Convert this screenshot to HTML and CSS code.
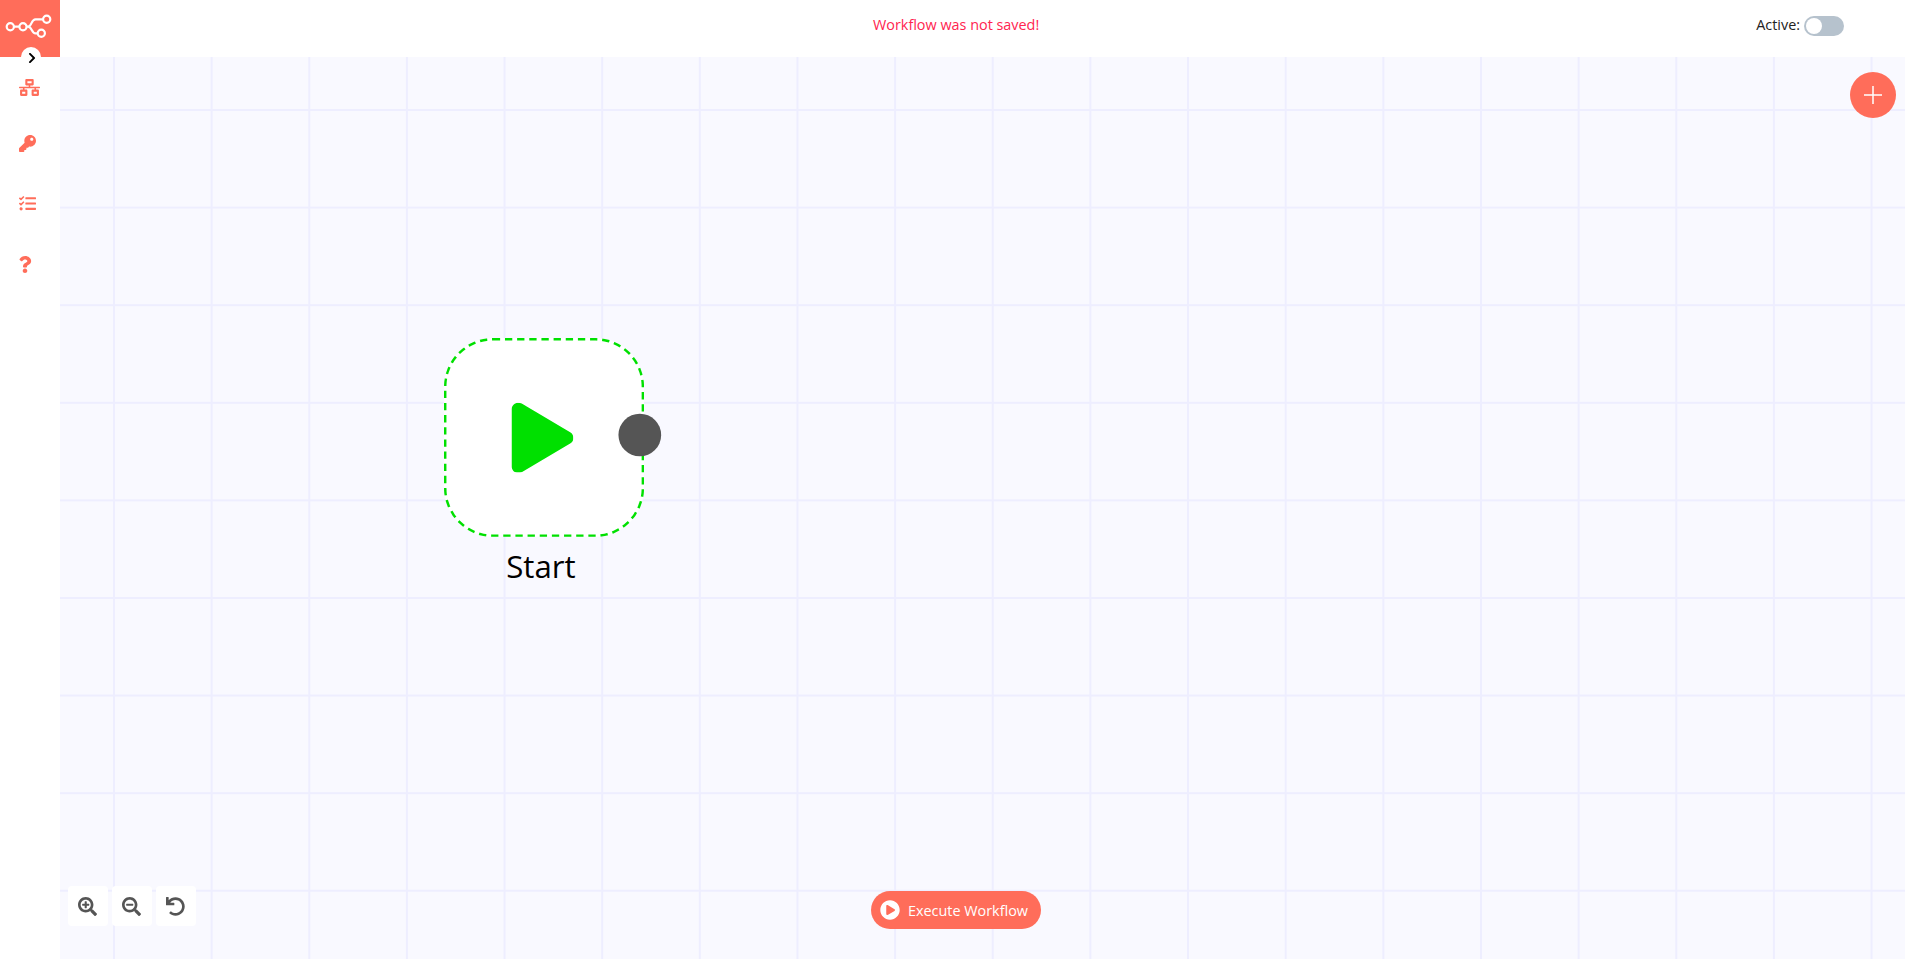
FILE: index.html
```html
<!DOCTYPE html>
<html lang="en">
<head>
    <meta charset="UTF-8">
    <meta name="viewport" content="width=device-width, initial-scale=1.0">
    <title>n8n - Workflow Automation</title>
    <link rel="stylesheet" href="styles.css">
</head>
<body>
    <div class="app">
        <aside class="sidebar">
            <div class="logo">
                <svg class="logo-mark" viewBox="0 0 60 57">
                    <circle cx="10.3" cy="26.7" r="3.6"/>
                    <circle cx="23" cy="26.7" r="3.6"/>
                    <circle cx="46.7" cy="19.3" r="3.6"/>
                    <circle cx="41.3" cy="33.3" r="3.6"/>
                    <path d="M13.9 26.7h5.500M26.600 26.700h1.400c4 0 3-7.400 7.500-7.400h7.600M28 26.700c4 0 3.500 6.600 7.500 6.600h2.200"/>
                </svg>
            </div>
            <button class="collapse">
                <svg class="collapse-icon" viewBox="0 0 320 512"><path d="M285.476 272.971L91.132 467.314c-9.373 9.373-24.569 9.373-33.941 0l-22.667-22.667c-9.357-9.357-9.375-24.522-.04-33.901L188.505 256 34.484 101.255c-9.335-9.379-9.317-24.544.04-33.901l22.667-22.667c9.373-9.373 24.569-9.373 33.941 0L285.475 239.03c9.373 9.372 9.373 24.568.001 33.941z"/></svg>
            </button>
            <nav class="menu">
                <a class="menu-item menu-workflows">
                    <svg class="menu-icon" viewBox="0 0 640 512"><path d="M640 264v-16c0-8.840-7.160-16-16-16H344v-40h72c17.670 0 32-14.330 32-32V32c0-17.670-14.330-32-32-32H224c-17.670 0-32 14.330-32 32v128c0 17.670 14.330 32 32 32h72v40H16c-8.840 0-16 7.160-16 16v16c0 8.840 7.160 16 16 16h104v40H64c-17.670 0-32 14.330-32 32v128c0 17.670 14.330 32 32 32h160c17.670 0 32-14.330 32-32V352c0-17.670-14.330-32-32-32h-56v-40h304v40h-56c-17.670 0-32 14.330-32 32v128c0 17.670 14.330 32 32 32h160c17.670 0 32-14.330 32-32V352c0-17.670-14.330-32-32-32h-56v-40h104c8.840 0 16-7.160 16-16zM256 128V64h128v64H256zm-64 320H96v-64h96v64zm352 0h-96v-64h96v64z"/></svg>
                </a>
                <a class="menu-item menu-credentials">
                    <svg class="menu-icon" viewBox="0 0 512 512"><path d="M512 176.001C512 273.203 433.202 352 336 352c-11.220 0-22.190-1.062-32.827-3.069l-24.012 27.014A23.999 23.999 0 0 1 261.223 384H224v40c0 13.255-10.745 24-24 24h-40v40c0 13.255-10.745 24-24 24H24c-13.255 0-24-10.745-24-24v-78.059c0-6.365 2.529-12.470 7.029-16.971l161.802-161.802C163.108 213.814 160 195.271 160 176 160 78.798 238.797.001 335.999 0 433.488-.001 512 78.511 512 176.001zM336 128c0 26.510 21.490 48 48 48s48-21.490 48-48-21.490-48-48-48-48 21.490-48 48z"/></svg>
                </a>
                <a class="menu-item menu-executions">
                    <svg class="menu-icon" viewBox="0 0 512 512"><path d="M139.610 35.500a12 12 0 0 0-17 0L58.930 98.810l-22.700-22.120a12 12 0 0 0-17 0L3.530 92.410a12 12 0 0 0 0 17l47.590 47.400a12.780 12.780 0 0 0 17.610 0l15.590-15.620L156.520 69a12.090 12.090 0 0 0 .09-17zm0 159.190a12 12 0 0 0-17 0l-63.680 63.720-22.700-22.100a12 12 0 0 0-17 0L3.530 252a12 12 0 0 0 0 17L51 316.500a12.770 12.770 0 0 0 17.600 0l15.700-15.690 72.200-72.220a12 12 0 0 0 .09-16.900zM64 368c-26.490 0-48.590 21.500-48.590 48S37.530 464 64 464a48 48 0 0 0 0-96zm432 16H208a16 16 0 0 0-16 16v32a16 16 0 0 0 16 16h288a16 16 0 0 0 16-16v-32a16 16 0 0 0-16-16zm0-320H208a16 16 0 0 0-16 16v32a16 16 0 0 0 16 16h288a16 16 0 0 0 16-16V80a16 16 0 0 0-16-16zm0 160H208a16 16 0 0 0-16 16v32a16 16 0 0 0 16 16h288a16 16 0 0 0 16-16v-32a16 16 0 0 0-16-16z"/></svg>
                </a>
                <a class="menu-item menu-help">
                    <svg class="menu-icon menu-icon-help" viewBox="0 0 384 512"><path d="M202.021 0C122.202 0 70.503 32.703 29.914 91.026c-7.363 10.580-5.093 25.086 5.178 32.874l43.138 32.709c10.373 7.865 25.132 6.026 33.253-4.148 25.049-31.381 43.630-49.449 82.757-49.449 30.764 0 68.816 19.799 68.816 49.631 0 22.552-18.617 34.134-48.993 51.164-35.423 19.860-82.299 44.576-82.299 106.405V320c0 13.255 10.745 24 24 24h72.471c13.255 0 24-10.745 24-24v-5.773c0-42.860 125.268-44.645 125.268-160.627C377.504 66.256 286.902 0 202.021 0zM192 373.459c-38.196 0-69.271 31.075-69.271 69.271 0 38.195 31.075 69.270 69.271 69.270s69.271-31.075 69.271-69.271-31.075-69.270-69.271-69.270z"/></svg>
                </a>
            </nav>
        </aside>

        <main class="main">
            <header class="topbar">
                <span></span>
                <span class="save-status">Workflow was not saved!</span>
                <div class="active-switch">
                    <span>Active:</span>
                    <span class="switch"><span class="switch-knob"></span></span>
                </div>
            </header>

            <section class="canvas">
                <button class="add-node">
                    <svg viewBox="0 0 18 18"><path d="M9 0v18M0 9h18"/></svg>
                </button>

                <div class="node">
                    <div class="node-box">
                        <svg class="node-icon" viewBox="0 0 448 512"><path d="M424.400 214.700L72.400 6.600C43.800-10.300 0 6.100 0 47.900V464c0 37.500 40.700 60.100 72.400 41.300l352-208c31.400-18.500 31.500-64.100 0-82.600z"/></svg>
                    </div>
                    <span class="node-endpoint"></span>
                    <div class="node-name">Start</div>
                </div>

                <div class="zoom-controls">
                    <button class="zoom-btn">
                        <svg viewBox="0 0 512 512"><path d="M304 192v32c0 6.600-5.400 12-12 12h-56v56c0 6.600-5.400 12-12 12h-32c-6.600 0-12-5.400-12-12v-56h-56c-6.600 0-12-5.400-12-12v-32c0-6.600 5.400-12 12-12h56v-56c0-6.600 5.400-12 12-12h32c6.600 0 12 5.400 12 12v56h56c6.600 0 12 5.400 12 12zm201 284.700L476.700 505c-9.400 9.400-24.600 9.400-33.900 0L343 405.300c-4.500-4.500-7-10.600-7-17V372c-35.300 27.600-79.700 44-128 44C93.100 416 0 322.900 0 208S93.100 0 208 0s208 93.100 208 208c0 48.300-16.400 92.700-44 128h16.300c6.400 0 12.500 2.500 17 7l99.700 99.700c9.300 9.400 9.300 24.600 0 34zM344 208c0-75.200-60.800-136-136-136S72 132.800 72 208s60.800 136 136 136 136-60.800 136-136z"/></svg>
                    </button>
                    <button class="zoom-btn">
                        <svg viewBox="0 0 512 512"><path d="M304 192v32c0 6.600-5.400 12-12 12H124c-6.600 0-12-5.400-12-12v-32c0-6.600 5.400-12 12-12h168c6.600 0 12 5.400 12 12zm201 284.700L476.700 505c-9.400 9.400-24.600 9.400-33.900 0L343 405.300c-4.500-4.500-7-10.600-7-17V372c-35.300 27.600-79.700 44-128 44C93.100 416 0 322.900 0 208S93.100 0 208 0s208 93.100 208 208c0 48.300-16.400 92.700-44 128h16.300c6.400 0 12.500 2.500 17 7l99.700 99.700c9.300 9.400 9.300 24.600 0 34zM344 208c0-75.200-60.800-136-136-136S72 132.800 72 208s60.800 136 136 136 136-60.800 136-136z"/></svg>
                    </button>
                    <button class="zoom-btn zoom-reset">
                        <svg viewBox="0 0 512 512"><path d="M212.333 224.333H12c-6.627 0-12-5.373-12-12V12C0 5.373 5.373 0 12 0h48c6.627 0 12 5.373 12 12v78.112C117.773 39.279 184.260 7.470 258.175 8.007c136.906.994 246.448 111.623 246.157 248.532C504.041 393.258 393.120 504 256.333 504c-64.089 0-122.496-24.313-166.510-64.215-5.099-4.622-5.334-12.554-.467-17.420l33.967-33.967c4.474-4.474 11.662-4.717 16.401-.525C170.760 415.336 211.580 432 256.333 432c97.268 0 176-78.716 176-176 0-97.267-78.716-176-176-176-58.496 0-110.280 28.476-142.274 72.333h98.274c6.627 0 12 5.373 12 12v48c0 6.627-5.373 12-12 12z"/></svg>
                    </button>
                </div>

                <button class="execute">
                    <svg class="execute-icon" viewBox="0 0 512 512"><path d="M256 8C119 8 8 119 8 256s111 248 248 248 248-111 248-248S393 8 256 8zm115.700 272l-176 101c-15.800 8.800-35.700-2.500-35.700-21V152c0-18.400 19.800-29.800 35.700-21l176 107c16.400 9.200 16.400 32.900 0 42z"/></svg>
                    <span>Execute Workflow</span>
                </button>
            </section>
        </main>
    </div>
</body>
</html>
```

FILE: styles.css
```css
* {
    box-sizing: border-box;
}
html, body {
    height: 100%;
}
body {
    margin: 0;
    font-family: 'Open Sans', sans-serif;
    font-size: 14.4px;
    background-color: #fff;
    overflow: hidden;
}
button {
    border: none;
    padding: 0;
    font-family: inherit;
    cursor: pointer;
}
.app {
    display: flex;
    height: 100%;
}

/* sidebar */
.sidebar {
    position: relative;
    z-index: 2;
    flex: 0 0 60px;
    background: #fff;
}
.logo {
    height: 57px;
    background-color: #ff6d5a;
}
.logo-mark {
    display: block;
    width: 60px;
    height: 57px;
    fill: none;
    stroke: #fff;
    stroke-width: 2.2;
}
.collapse {
    position: absolute;
    top: 47px;
    left: 21px;
    width: 20px;
    height: 20px;
    display: flex;
    align-items: center;
    justify-content: center;
    background: #fff;
    border-radius: 50%;
}
.collapse-icon {
    width: 8px;
    height: 12px;
    margin-left: 1px;
    margin-top: 2px;
    fill: #000;
}
.menu {
    margin-top: 1px;
}
.menu-item {
    display: flex;
    align-items: center;
    padding-left: 19px;
}
.menu-workflows {
    height: 59px;
}
.menu-credentials {
    height: 53px;
}
.menu-executions {
    height: 66px;
}
.menu-help {
    height: 57px;
}
.menu-icon {
    width: 17px;
    height: 17px;
    fill: #ff6d5a;
}
.menu-workflows .menu-icon {
    width: 21px;
}
.menu-icon-help {
    width: 14px;
    margin-left: -1px;
}

/* top bar */
.main {
    flex: 1;
    display: flex;
    flex-direction: column;
    min-width: 0;
}
.topbar {
    flex: 0 0 57px;
    display: grid;
    grid-template-columns: 813px auto 1fr;
    align-items: center;
    padding-right: 61px;
    background: #fff;
    padding-bottom: 8px;
}
.save-status {
    color: #ff2450;
}
.active-switch {
    display: flex;
    align-items: center;
    justify-content: flex-end;
    gap: 4px;
    color: #222;
}
.switch {
    width: 40px;
    height: 20px;
    padding: 2px;
    margin-top: 2px;
    border-radius: 10px;
    background-color: #b6c2cd;
}
.switch-knob {
    display: block;
    width: 16px;
    height: 16px;
    border-radius: 50%;
    background: #fff;
}

/* canvas */
.canvas {
    position: relative;
    flex: 1;
    background-color: #f9f9ff;
    background-image:
        linear-gradient(to right, #eeeeff 2.4px, transparent 2.4px),
        linear-gradient(to bottom, #eeeeff 2.4px, transparent 2.4px);
    background-size: 97.65px 97.6px;
    background-position: 53px 52px;
}
.add-node {
    position: absolute;
    top: 15px;
    right: 9px;
    width: 46px;
    height: 46px;
    display: flex;
    align-items: center;
    justify-content: center;
    border-radius: 50%;
    background-color: #ff6d5a;
}
.add-node svg {
    width: 18px;
    height: 18px;
    fill: none;
    stroke: #fff;
    stroke-width: 1.5;
}

/* start node, drawn at the canvas zoom */
.node {
    position: absolute;
    top: 281px;
    left: 384px;
    width: 164px;
    transform: scale(1.22);
    transform-origin: 0 0;
}
.node-box {
    height: 163px;
    display: flex;
    align-items: center;
    justify-content: center;
    background: #fff;
    border: 2px dashed #00e000;
    border-radius: 40px;
}
.node-icon {
    width: 51.6px;
    height: 57.8px;
    margin-left: -3.4px;
    fill: #00e000;
}
.node-endpoint {
    position: absolute;
    top: 62.2px;
    left: 142.5px;
    width: 35.2px;
    height: 35.2px;
    border-radius: 50%;
    background-color: #555;
}
.node-name {
    margin-top: 8px;
    padding-right: 5px;
    text-align: center;
    font-size: 25.6px;
    line-height: 33px;
    color: #000;
}

/* zoom buttons */
.zoom-controls {
    position: absolute;
    left: 8px;
    bottom: 33px;
    display: flex;
    gap: 4px;
}
.zoom-btn {
    width: 40px;
    height: 40px;
    display: flex;
    align-items: center;
    justify-content: center;
    background: #fff;
    border-radius: 4px;
}
.zoom-btn svg {
    width: 19px;
    height: 19px;
    margin-left: -1px;
    fill: #555;
}
.zoom-reset svg {
    margin-left: -1px;
}

/* execute */
.execute {
    position: absolute;
    left: 811px;
    bottom: 30px;
    width: 170px;
    height: 38px;
    display: flex;
    align-items: center;
    gap: 8px;
    padding-left: 9px;
    border-radius: 19px;
    background-color: #ff6d5a;
    color: #fff;
    font-size: 14.4px;
    font-weight: 500;
}
.execute-icon {
    width: 20px;
    height: 20px;
    fill: #fff;
}
```
